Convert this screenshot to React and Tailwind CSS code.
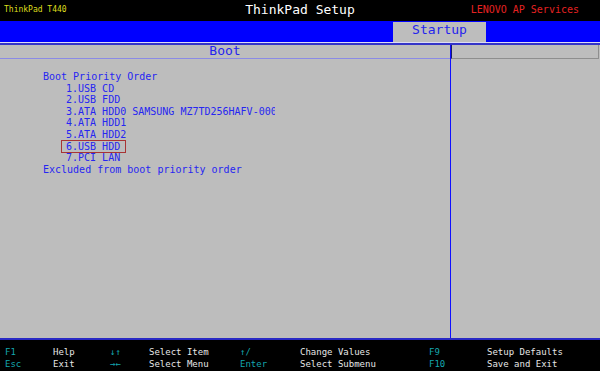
import React from "react";

const items = [
  "1.USB CD",
  "2.USB FDD",
  "3.ATA HDD0 SAMSUNG MZ7TD256HAFV-000C",
  "4.ATA HDD1",
  "5.ATA HDD2",
  "6.USB HDD",
  "7.PCI LAN",
];

const keys = [
  ["F1", "Help", "↓↑", "Select Item", "↑/", "Change Values", "F9", "Setup Defaults"],
  ["Esc", "Exit", "→←", "Select Menu", "Enter", "Select Submenu", "F10", "Save and Exit"],
];

function TopBar() {
  return (
    <div className="h-[21px] bg-black grid grid-cols-[1fr_auto_1fr] items-center">
      <div className="pl-[4px] text-[8px] leading-[10px] text-[#dede1c] -mt-[1px]">ThinkPad T440</div>
      <div className="text-[13px] leading-[15px] text-white -mt-[2px]">ThinkPad Setup</div>
      <div className="justify-self-end pr-[21px] text-[10px] leading-[12px] text-[#e52222] -mt-[1px]">
        LENOVO AP Services
      </div>
    </div>
  );
}

function TabBar() {
  return (
    <div>
      <div className="h-[21px] bg-[#0000ff] flex items-end">
        <div className="ml-[393px] w-[93px] h-[20px] bg-[#bdbdbd] text-center text-[13px] leading-[15px] text-[#2424ee]">
          Startup
        </div>
      </div>
      <div className="h-px bg-[#dcdcf4]" />
      <div className="h-[2px] bg-[#3434c8]" />
    </div>
  );
}

function BootPanel() {
  return (
    <div className="w-[450px] flex flex-col">
      <div className="h-[14px] border-b border-[#8a8ae6] text-center text-[13px] leading-[11px] text-[#2424ee]">
        Boot
      </div>
      <div className="pt-[12px] pl-[43px] text-[10px] leading-[11.6px] text-[#2626f2]">
        <div>Boot Priority Order</div>
        {items.map((item, i) => (
          <div key={i} className={"pl-[23px] whitespace-pre " + (i === 2 ? "w-[232px] overflow-hidden" : "")}>
            {i === 5 ? (
              <span className="pl-[4px] pr-[5px] -ml-[4px] ring-1 ring-[#a83434]">{item}</span>
            ) : (
              item
            )}
          </div>
        ))}
        <div>Excluded from boot priority order</div>
      </div>
    </div>
  );
}

function Footer() {
  return (
    <div className="h-[31px] bg-black pt-[6px] pl-[5px] text-[9px] leading-[12px]">
      {keys.map((row, r) => (
        <div key={r} className="grid grid-cols-[48px_57px_39px_91px_60px_129px_58px_1fr]">
          {row.map((t, i) => (
            <div key={i} className={i % 2 === 0 ? "text-[#14a6ae]" : "text-[#e6e6e6]"}>
              {t}
            </div>
          ))}
        </div>
      ))}
    </div>
  );
}

export default function App() {
  return (
    <div className="w-[600px] h-[371px] overflow-hidden bg-[#bdbdbd] font-['DejaVu_Sans_Mono',monospace] flex flex-col">
      <TopBar />
      <TabBar />
      <div className="h-[293px] flex">
        <BootPanel />
        <div className="w-px bg-[#1010ff]" />
        <div className="flex-1 flex flex-col">
          <div className="h-[14px] mr-[1px] border-l border-b border-r border-l-[#1a1a6a] border-b-[#8e8e8e] border-r-[#8e8e8e]" />
        </div>
      </div>
      <div className="h-[2px] bg-[#2a2ac4]" />
      <Footer />
    </div>
  );
}
